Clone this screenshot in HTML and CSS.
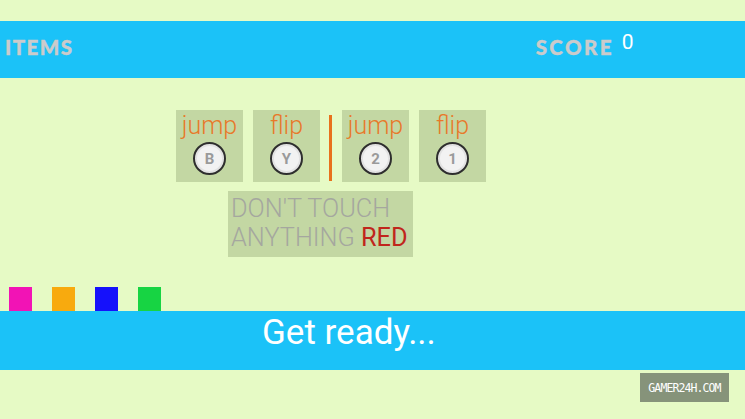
FILE: index.html
```html
<!DOCTYPE html>
<html>
<head>
<meta charset="utf-8">
<link rel="stylesheet" href="styles.css">
</head>
<body>
<div class="screen">
  <header class="topbar">
    <div class="label items">ITEMS</div>
    <div class="score">
      <span class="label">SCORE</span>
      <span class="score-val">0</span>
    </div>
  </header>
  <main class="middle">
    <div class="controls">
      <div class="ctrl"><span class="word">jump</span><span class="btn">B</span></div>
      <div class="ctrl"><span class="word">flip</span><span class="btn">Y</span></div>
      <div class="divider"></div>
      <div class="ctrl"><span class="word">jump</span><span class="btn">2</span></div>
      <div class="ctrl"><span class="word">flip</span><span class="btn">1</span></div>
    </div>
    <div class="warning">DON'T TOUCH<br>ANYTHING <span class="red">RED</span></div>
    <div class="swatches">
      <div class="sw pink"></div>
      <div class="sw orange"></div>
      <div class="sw blue"></div>
      <div class="sw green"></div>
    </div>
  </main>
  <footer class="bottombar">Get ready...</footer>
  <div class="foot">
    <div class="watermark">GAMER24H.COM</div>
  </div>
</div>
</body>
</html>
```

FILE: styles.css
```css
html, body {
  margin: 0;
  padding: 0;
  background: #e6fac5;
}
.screen {
  width: 745px;
  height: 419px;
  padding-top: 21px;
  box-sizing: border-box;
  display: flex;
  flex-direction: column;
  overflow: hidden;
}
.topbar {
  height: 57px;
  background: #1bc2f8;
  display: flex;
  align-items: flex-start;
  padding-left: 5px;
  box-sizing: border-box;
}
.label {
  font-family: "Lato", "DejaVu Sans", sans-serif;
  font-weight: 900;
  font-size: 20.5px;
  color: #cbcbcb;
  letter-spacing: 1.5px;
  -webkit-text-stroke: 0.4px #cbcbcb;
}
.items {
  margin-top: 14px;
}
.score {
  margin-left: 462px;
  margin-top: 10px;
  display: flex;
  align-items: flex-start;
}
.score .label {
  margin-top: 4px;
  letter-spacing: 2.4px;
}
.score-val {
  font-family: "Roboto", sans-serif;
  font-size: 21px;
  color: #ffffff;
  margin-left: 8px;
  margin-top: -1px;
}
.middle {
  height: 233px;
  position: relative;
  display: flex;
  flex-direction: column;
}
.controls {
  display: flex;
  margin-top: 32px;
  margin-left: 176px;
  height: 72px;
}
.ctrl {
  width: 67px;
  height: 72px;
  background: #c3d7a3;
  display: flex;
  flex-direction: column;
  align-items: center;
  margin-right: 10px;
}
.word {
  font-family: "Roboto", sans-serif;
  font-weight: 300;
  font-size: 25px;
  color: #e8792a;
  line-height: 30px;
  margin-top: 1px;
}
.btn {
  width: 29px;
  height: 29px;
  border-radius: 50%;
  border: 2px solid #2e2e2e;
  background: #f2f2f2;
  box-shadow: inset 0 0 0 2px #e2e2e2;
  color: #9a9a9a;
  font-family: "Roboto", sans-serif;
  font-weight: 700;
  font-size: 15px;
  display: flex;
  align-items: center;
  justify-content: center;
  margin-top: 1px;
}
.divider {
  width: 3px;
  height: 66px;
  background: #e8721c;
  margin: 5px 10px 0 -1px;
}
.warning {
  margin-left: 228px;
  margin-top: 9px;
  width: 185px;
  height: 66px;
  box-sizing: border-box;
  background: #c3d7a3;
  padding: 3px 0 0 3px;
  font-family: "Roboto", sans-serif;
  font-weight: 300;
  font-size: 25.3px;
  line-height: 29px;
  color: #a5a79f;
  white-space: nowrap;
}
.red {
  color: #c0261c;
  font-weight: 400;
}
.swatches {
  display: flex;
  margin-top: auto;
  margin-left: 9px;
  gap: 20px;
}
.sw {
  width: 23px;
  height: 24px;
}
.pink { background: #f213b5; }
.orange { background: #f8aa0e; }
.blue { background: #1511fb; }
.green { background: #17d443; }
.bottombar {
  height: 59px;
  background: #1bc2f8;
  color: #ffffff;
  font-family: "Roboto", sans-serif;
  font-size: 35px;
  line-height: 40px;
  padding-left: 262px;
  padding-top: 2px;
  box-sizing: border-box;
}
.foot {
  flex: 1;
  display: flex;
  justify-content: flex-end;
  padding-right: 16px;
  padding-top: 3px;
}
.watermark {
  width: 89px;
  height: 29px;
  background: #86937a;
  color: #ffffff;
  font-family: "DejaVu Sans Mono", monospace;
  font-size: 11.5px;
  letter-spacing: -0.9px;
  display: flex;
  align-items: center;
  justify-content: center;
}
```
